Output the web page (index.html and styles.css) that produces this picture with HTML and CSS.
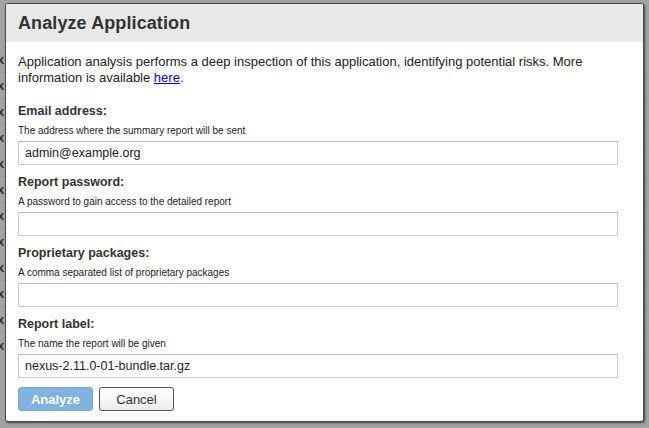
FILE: index.html
```html
<!DOCTYPE html>
<html>
<head>
<meta charset="utf-8">
<title>Analyze Application</title>
<link rel="stylesheet" href="styles.css">
</head>
<body>
<div class="backdrop">
  <div class="row"><span class="mark">x</span></div>
  <div class="row"><span class="mark">x</span></div>
  <div class="row"><span class="mark">x</span></div>
  <div class="row"><span class="mark">x</span></div>
  <div class="row"><span class="mark">x</span></div>
  <div class="row"><span class="mark">x</span></div>
  <div class="row"><span class="mark">x</span></div>
  <div class="row"><span class="mark">x</span></div>
  <div class="row"><span class="mark">x</span></div>
  <div class="row"><span class="mark">x</span></div>
  <div class="row"><span class="mark">x</span></div>
  <div class="row"><span class="mark">x</span></div>
</div>
<div class="dialog">
  <div class="dialog-header">
    <h1 class="dialog-title">Analyze Application</h1>
  </div>
  <div class="dialog-body">
    <p class="intro">Application analysis performs a deep inspection of this application, identifying potential risks. More information is available <a href="#" class="link">here</a>.</p>
    <div class="field">
      <label class="field-label">Email address:</label>
      <div class="field-help">The address where the summary report will be sent</div>
      <div class="input">admin@example.org</div>
    </div>
    <div class="field">
      <label class="field-label">Report password:</label>
      <div class="field-help">A password to gain access to the detailed report</div>
      <div class="input"></div>
    </div>
    <div class="field">
      <label class="field-label">Proprietary packages:</label>
      <div class="field-help">A comma separated list of proprietary packages</div>
      <div class="input"></div>
    </div>
    <div class="field">
      <label class="field-label">Report label:</label>
      <div class="field-help">The name the report will be given</div>
      <div class="input">nexus-2.11.0-01-bundle.tar.gz</div>
    </div>
    <div class="buttons">
      <button class="btn btn-primary">Analyze</button>
      <button class="btn btn-default">Cancel</button>
    </div>
  </div>
</div>
</body>
</html>
```

FILE: styles.css
```css
html, body {
  margin: 0;
  padding: 0;
}
body {
  width: 649px;
  height: 428px;
  overflow: hidden;
  background: #a2a2a2;
  font-family: "Liberation Sans", Arial, sans-serif;
  position: relative;
}
.backdrop {
  padding-top: 47px;
  display: flex;
  flex-direction: column;
}
.row {
  height: 25px;
  border-bottom: 1px solid #999999;
  display: flex;
  align-items: center;
}
.mark {
  margin-left: -3px;
  font-size: 13px;
  font-weight: bold;
  color: #333;
}
.dialog {
  position: absolute;
  left: 5px;
  top: 3px;
  width: 637px;
  height: 417px;
  background: #ffffff;
  border: 1px solid #4a4a4a;
  border-radius: 3px;
  box-shadow: 1px 1px 2px rgba(0,0,0,0.6);
  overflow: hidden;
}
.dialog-header {
  background: #e8e8e8;
  height: 38px;
  display: flex;
  align-items: center;
  padding-left: 12px;
}
.dialog-title {
  margin: 0;
  font-size: 18px;
  font-weight: bold;
  color: #333333;
  letter-spacing: 0.1px;
}
.dialog-body {
  padding: 12px 12px 0 12px;
}
.intro {
  margin: 0 0 17px 0;
  font-size: 13px;
  line-height: 16px;
  color: #222;
}
.link {
  color: #0000ee;
  text-decoration: underline;
}
.field {
  display: flex;
  flex-direction: column;
  margin-bottom: 9px;
}
.field-label {
  font-size: 12.5px;
  font-weight: bold;
  line-height: 16px;
  color: #333;
}
.field-help {
  margin-top: 6px;
  font-size: 10px;
  line-height: 12px;
  color: #222;
}
.input {
  margin-top: 4px;
  width: 592px;
  height: 22px;
  border: 1px solid #cccccc;
  border-top-color: #bdbdbd;
  font-size: 12.5px;
  line-height: 22px;
  padding-left: 6px;
  box-sizing: content-box;
  color: #222;
}
.buttons {
  display: flex;
  gap: 6px;
  margin-top: 2px;
}
.btn {
  width: 75px;
  height: 24px;
  font-family: "Liberation Sans", Arial, sans-serif;
  font-size: 13px;
  border-radius: 3px;
  padding: 0;
}
.btn-primary {
  background: #82b3de;
  border: 1px solid #76a8d4;
  color: #ffffff;
  font-weight: bold;
}
.btn-default {
  background: linear-gradient(#ffffff, #ececec);
  border: 1px solid #555555;
  color: #333;
}
```
